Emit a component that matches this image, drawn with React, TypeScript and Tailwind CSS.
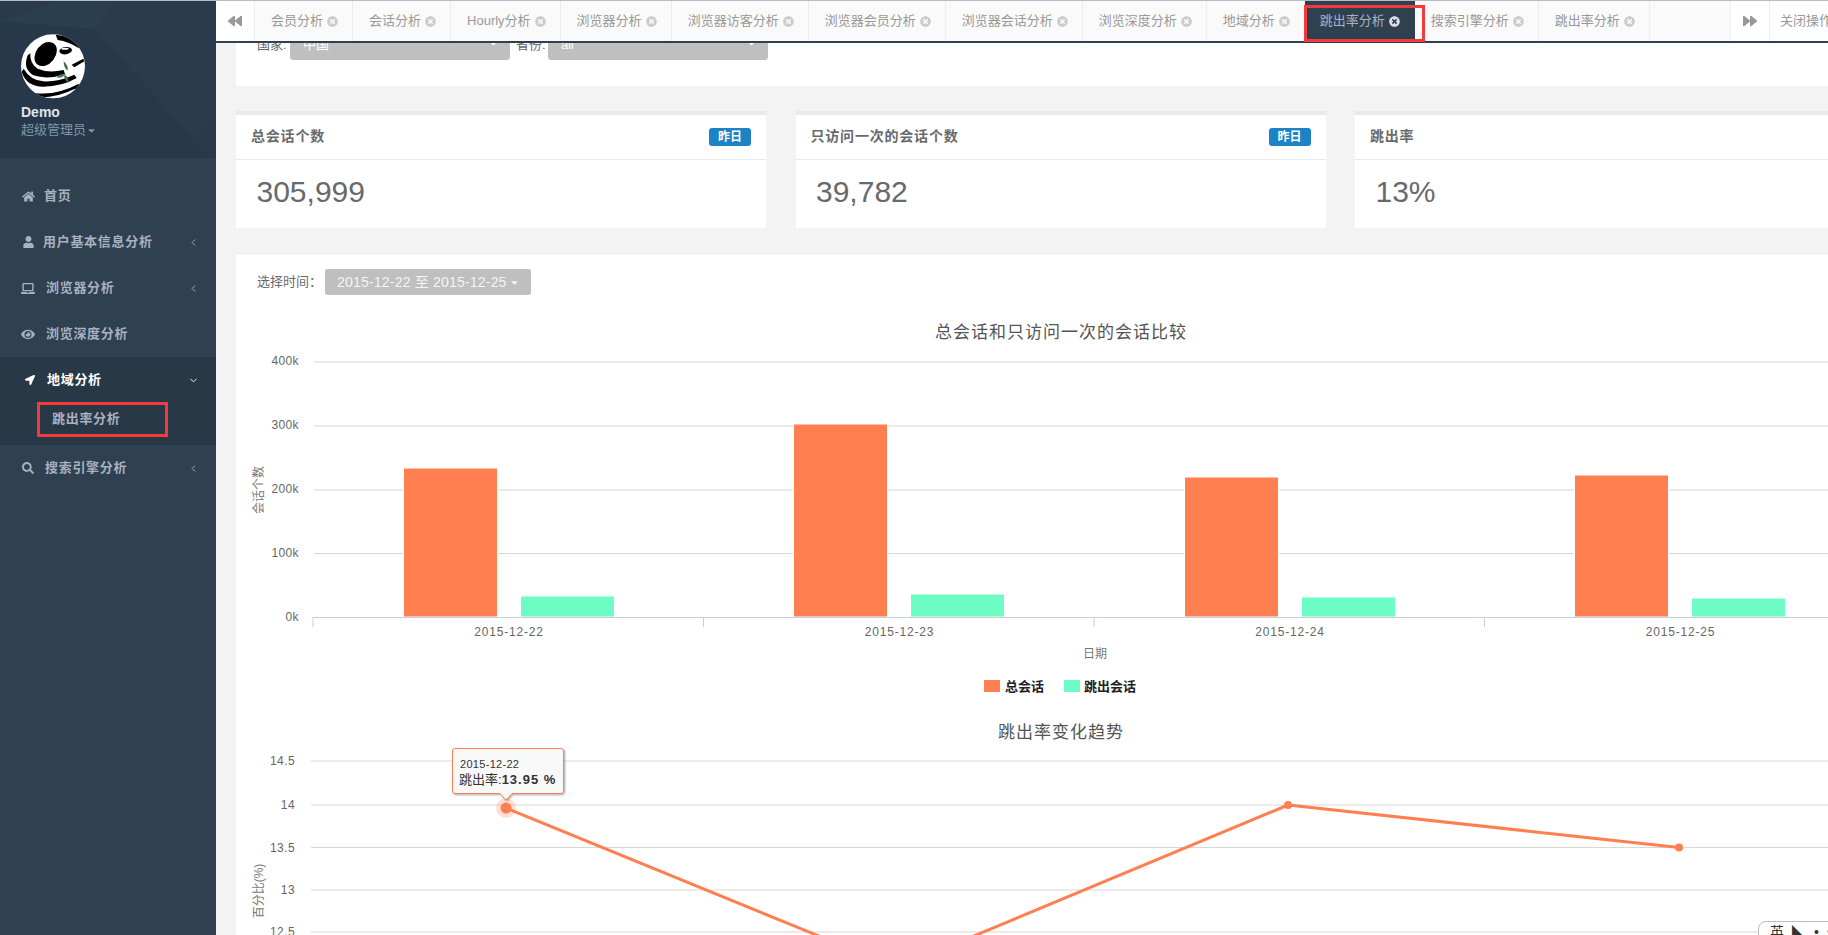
import {
  FaBackward,
  FaCaretDown,
  FaEye,
  FaForward,
  FaHome,
  FaLaptop,
  FaLocationArrow,
  FaSearch,
  FaTimesCircle,
  FaUser,
} from "react-icons/fa";
import { ChevronDown, ChevronLeft } from "lucide-react";

const tabs = [
  "会员分析",
  "会话分析",
  "Hourly分析",
  "浏览器分析",
  "浏览器访客分析",
  "浏览器会员分析",
  "浏览器会话分析",
  "浏览深度分析",
  "地域分析",
  "跳出率分析",
  "搜索引擎分析",
  "跳出率分析",
];
const ACTIVE_TAB = 9;

const bars = [
  { label: "2015-12-22", tick: 313, ox: 404, oy: 468, gy: 596 },
  { label: "2015-12-23", tick: 703.5, ox: 794, oy: 424, gy: 594 },
  { label: "2015-12-24", tick: 1094, ox: 1185, oy: 477, gy: 597 },
  { label: "2015-12-25", tick: 1484.5, ox: 1575, oy: 475, gy: 598 },
];

function Panda() {
  return (
    <svg viewBox="0 0 228 228" className="w-[76px] h-[76px] ml-[15px]">
      <defs>
        <clipPath id="panda-clip">
          <circle cx="114" cy="115" r="96" />
        </clipPath>
      </defs>
      <g clipPath="url(#panda-clip)">
        <rect width="228" height="228" fill="#fff" />
        {/* ear */}
        <path d="M122 20 Q165 22 210 50 L190 60 Q160 40 128 36 Z" fill="#000" />
        {/* eye patch */}
        <ellipse cx="92" cy="78" rx="29" ry="40" transform="rotate(38 92 78)" fill="#000" />
        <ellipse cx="152" cy="68" rx="19" ry="11" transform="rotate(-8 152 68)" fill="#000" />
        <ellipse cx="150" cy="62" rx="11" ry="3" fill="#fff" />
        {/* body stripes */}
        <path d="M38 82 Q22 122 55 142 Q100 156 150 138 L146 126 Q100 136 68 122 Q44 108 46 76 Z" fill="#000" />
        <path d="M20 132 Q34 176 85 176 Q140 176 185 150 L178 140 Q130 162 85 160 Q45 156 26 122 Z" fill="#000" />
        <path d="M55 194 Q120 205 190 168 L215 180 L190 230 L60 215 Z" fill="#000" />
        <path d="M62 207 Q120 212 180 182 L185 190 Q130 222 70 218 Z" fill="#fff" />
        <path d="M170 110 L205 92 L208 100 L178 118 Z" fill="#000" />
        {/* leaves */}
        <path d="M146 100 Q160 112 158 128 Q146 120 146 100 Z" fill="#3f6b47" />
        <path d="M124 148 Q138 134 152 138 Q142 152 124 148 Z" fill="#4d7a55" />
        <path d="M148 140 Q162 146 160 164 Q146 156 148 140 Z" fill="#3f6b47" />
      </g>
    </svg>
  );
}

function SideHeader() {
  return (
    <div className="relative h-[157px] bg-[#283a4b] overflow-hidden">
      <svg className="absolute inset-0 w-full h-full" viewBox="0 0 216 157">
        <polygon points="0,20 95,28 195,140 216,157 0,157" fill="#263849" />
        <polygon points="95,28 115,0 216,0 216,115 190,135" fill="#293b4c" />
        <polygon points="0,20 60,0 115,0 95,28" fill="#2b3e4f" />
      </svg>
      <div className="relative pt-[27px]">
        <Panda />
        <div className="pl-[21px] -mt-[1px] text-[14px] leading-[18px] font-bold text-[#dfe4ed]">Demo</div>
        <div className="pl-[21px] flex items-center text-[13px] leading-[18px] text-[#8095a8]">
          超级管理员
          <FaCaretDown className="w-[11px] h-[11px]" />
        </div>
      </div>
    </div>
  );
}

function NavItem({
  icon,
  label,
  textLeft,
  arrow,
}: {
  icon: React.ReactNode;
  label: string;
  textLeft: string;
  arrow?: boolean;
}) {
  return (
    <div className="h-[46px] flex items-center pl-[21px] pr-[17px] text-[#a7b1c2] text-[13px] font-semibold tracking-[0.7px]">
      <span className="w-[14px] flex justify-center shrink-0">{icon}</span>
      <span className={textLeft}>{label}</span>
      {arrow && <ChevronLeft className="ml-auto w-[11px] h-[11px]" strokeWidth={2} />}
    </div>
  );
}

function Sidebar() {
  return (
    <aside className="w-[216px] shrink-0 bg-[#2f4050]">
      <SideHeader />
      <nav className="pt-[15px]">
        <NavItem icon={<FaHome className="w-[13px] h-[13px]" />} label="首页" textLeft="ml-[9px] -mt-[1px]" />
        <NavItem icon={<FaUser className="w-[11px] h-[12px]" />} label="用户基本信息分析" textLeft="ml-[8px] -mt-[1px]" arrow />
        <NavItem icon={<FaLaptop className="w-[14px] h-[13px]" />} label="浏览器分析" textLeft="ml-[11px] -mt-[1px]" arrow />
        <NavItem icon={<FaEye className="w-[14px] h-[13px]" />} label="浏览深度分析" textLeft="ml-[11px] -mt-[1px]" />
        <div className="h-[88px] bg-[#293846]">
          <div className="h-[46px] flex items-center pl-[25px] pr-[17px] text-white text-[13px] font-bold tracking-[0.7px]">
            <FaLocationArrow className="w-[10px] h-[10px]" />
            <span className="ml-[12px] -mt-[1px]">地域分析</span>
            <ChevronDown className="ml-auto w-[11px] h-[11px]" strokeWidth={2} />
          </div>
          <div className="ml-[37px] -mt-[1px] w-[131px] h-[35px] border-[3px] border-[#f33b3b] flex items-center pl-[12px] pb-[2px] text-[#a7b1c2] text-[13px] font-semibold tracking-[0.7px]">
            跳出率分析
          </div>
        </div>
        <NavItem icon={<FaSearch className="w-[12px] h-[12px]" />} label="搜索引擎分析" textLeft="ml-[10px] -mt-[1px]" arrow />
      </nav>
    </aside>
  );
}

function TabBar() {
  return (
    <div className="h-[42px] shrink-0 flex bg-white border-b-2 border-[#2f4050]">
      <div className="w-[39px] shrink-0 flex items-center justify-center border-r border-[#eee] text-[#999]">
        <FaBackward className="w-[14px] h-[14px]" />
      </div>
      <div className="w-[1475px] shrink-0 flex bg-[#fafafa]">
        {tabs.map((t, i) => (
          <div
            key={i}
            className={
              i === ACTIVE_TAB
                ? "relative shrink-0 flex items-center pl-[15px] pr-[15px] bg-[#2f4050] text-[#a7b1c2] text-[13px]"
                : "shrink-0 flex items-center pl-[16px] pr-[14px] border-r border-[#eee] text-[#999] text-[13px]"
            }
          >
            {t}
            <FaTimesCircle
              className={
                i === ACTIVE_TAB
                  ? "ml-[4px] w-[11px] h-[11px] text-[#dde]"
                  : "ml-[4px] w-[11px] h-[11px] text-[#ccc]"
              }
            />
            {i === ACTIVE_TAB && (
              <div className="absolute -left-[1px] top-[4px] w-[121px] h-[37px] border-[3px] border-[#f33b3b]" />
            )}
          </div>
        ))}
      </div>
      <div className="w-[40px] shrink-0 flex items-center justify-center border-x border-[#eee] text-[#999]">
        <FaForward className="w-[14px] h-[14px]" />
      </div>
      <div className="pl-[10px] flex items-center whitespace-nowrap text-[#999] text-[13px]">关闭操作</div>
    </div>
  );
}

function FilterPanel() {
  return (
    <div className="h-[43px] overflow-hidden bg-white pl-[21px]">
      <div className="-mt-[17px] h-[34px] flex items-center text-[13px] text-[#676a6c]">
        <span className="w-[33px] mt-[4px]">国家:</span>
        <div className="w-[220px] h-[34px] rounded-[3px] bg-[#bfbfbf] text-white flex items-center justify-between pl-[13px] pr-[12px]">
          <span className="mt-[4px]">中国</span>
          <FaCaretDown className="w-[9px] h-[9px]" />
        </div>
        <span className="ml-[6px] w-[32px] mt-[4px]">省份:</span>
        <div className="w-[220px] h-[34px] rounded-[3px] bg-[#bfbfbf] text-white flex items-center justify-between pl-[13px] pr-[12px]">
          <span className="mt-[4px]">all</span>
          <FaCaretDown className="w-[9px] h-[9px]" />
        </div>
      </div>
    </div>
  );
}

function StatCard({ title, value, badge }: { title: string; value: string; badge?: boolean }) {
  return (
    <div className="w-[530px] h-[117px] shrink-0 bg-white border-t-4 border-[#e7eaec] text-[#676a6c]">
      <div className="h-[45px] flex items-center justify-between px-[15px] border-b border-[#e7eaec]">
        <span className="text-[14px] font-semibold tracking-[0.8px] -mt-[1px]">{title}</span>
        {badge && (
          <span className="w-[42px] h-[18px] rounded-[3px] bg-[#1c84c6] text-white text-[12px] font-semibold flex items-center justify-center">
            昨日
          </span>
        )}
      </div>
      <div className="pl-[20.5px] pt-[14px] text-[30px] leading-[36px]">{value}</div>
    </div>
  );
}

function BarChart() {
  const grid = [
    { y: 362, t: "400k" },
    { y: 426, t: "300k" },
    { y: 490, t: "200k" },
    { y: 553.5, t: "100k" },
  ];
  return (
    <svg viewBox="236 300 1592 400" className="w-[1592px] h-[400px] mt-[5px] block">
      <text x="1061" y="338" textAnchor="middle" fontSize="17" letterSpacing="1" fill="#555">
        总会话和只访问一次的会话比较
      </text>
      {grid.map((g) => (
        <g key={g.t}>
          <line x1="314" x2="1828" y1={g.y} y2={g.y} stroke="#d8d8d8" />
          <text x="299" y={g.y + 3} textAnchor="end" fontSize="12" letterSpacing="0.4" fill="#666">
            {g.t}
          </text>
        </g>
      ))}
      <text x="299" y="621" textAnchor="end" fontSize="12" letterSpacing="0.4" fill="#666">
        0k
      </text>
      {bars.map((b) => (
        <g key={b.label}>
          <rect x={b.ox - 0.5} y={b.oy} width="94" height={617 - b.oy} fill="#ff7f50" stroke="#fff" />
          <rect x={b.ox + 116.5} y={b.gy} width="94" height={617 - b.gy} fill="#6dfcc4" stroke="#fff" />
          <line x1={b.tick} x2={b.tick} y1="617" y2="627" stroke="#c0d0e0" />
          <text x={b.tick + 196} y="636" textAnchor="middle" fontSize="12" letterSpacing="0.8" fill="#666">
            {b.label}
          </text>
        </g>
      ))}
      <line x1="313" x2="1828" y1="617.5" y2="617.5" stroke="#c0d0e0" />
      <text x="263" y="490" textAnchor="middle" fontSize="12" fill="#777" transform="rotate(-90 263 490)">
        会话个数
      </text>
      <text x="1095" y="658" textAnchor="middle" fontSize="12" fill="#777">
        日期
      </text>
      <rect x="984" y="680" width="16" height="12" fill="#ff7f50" />
      <text x="1005" y="691" fontSize="13" fontWeight="700" fill="#222">
        总会话
      </text>
      <rect x="1064" y="680" width="16" height="12" fill="#6dfcc4" />
      <text x="1084" y="691" fontSize="13" fontWeight="700" fill="#222">
        跳出会话
      </text>
    </svg>
  );
}

function LineChart() {
  const grid = [
    { y: 761, t: "14.5" },
    { y: 805, t: "14" },
    { y: 847.5, t: "13.5" },
    { y: 890, t: "13" },
    { y: 932, t: "12.5" },
  ];
  return (
    <svg viewBox="236 700 1592 300" className="w-[1592px] h-[300px] block">
      <defs>
        <filter id="tip-shadow" x="-10%" y="-10%" width="120%" height="130%">
          <feDropShadow dx="1" dy="1" stdDeviation="1" floodColor="#000" floodOpacity="0.35" />
        </filter>
      </defs>
      <text x="1061" y="738" textAnchor="middle" fontSize="17" letterSpacing="1" fill="#555">
        跳出率变化趋势
      </text>
      {grid.map((g) => (
        <g key={g.t}>
          <line x1="311" x2="1828" y1={g.y} y2={g.y} stroke="#d8d8d8" />
          <text x="295" y={g.y + 4} textAnchor="end" fontSize="12" letterSpacing="0.4" fill="#666">
            {g.t}
          </text>
        </g>
      ))}
      <text x="263" y="891" textAnchor="middle" fontSize="12" fill="#777" transform="rotate(-90 263 891)">
        百分比(%)
      </text>
      <polyline
        points="506,808 897,968 1288,805 1679,847.5"
        fill="none"
        stroke="#ff7f50"
        strokeWidth="3"
        strokeLinejoin="round"
      />
      <circle cx="506" cy="808" r="10" fill="#ff7f50" opacity="0.25" />
      <circle cx="506" cy="808" r="5.5" fill="#ff7f50" />
      <circle cx="1288" cy="805" r="4" fill="#ff7f50" />
      <circle cx="1679" cy="847.5" r="4" fill="#ff7f50" />
      <path
        d="M455 748.5 H561 Q563.5 748.5 563.5 751 V791 Q563.5 793.5 561 793.5 H512 L506 800 L500 793.5 H455 Q452.5 793.5 452.5 791 V751 Q452.5 748.5 455 748.5 Z"
        fill="#f9f9f9"
        stroke="#ff7f50"
        filter="url(#tip-shadow)"
      />
      <text x="460" y="768" fontSize="11" letterSpacing="0.3" fill="#333">
        2015-12-22
      </text>
      <text x="459" y="784" fontSize="13" fill="#333">
        跳出率:
        <tspan fontWeight="700" letterSpacing="1">
          13.95 %
        </tspan>
      </text>
    </svg>
  );
}

export default function App() {
  return (
    <div className="relative w-[1828px] h-[935px] overflow-hidden bg-[#f3f3f4] font-['Liberation_Sans','Noto_Sans_CJK_SC',sans-serif]">
      <div className="h-px bg-[#b7bbc6]" />
      <div className="flex h-[934px]">
        <Sidebar />
        <main className="w-[1612px] flex flex-col overflow-hidden">
          <TabBar />
          <div className="pl-[20px]">
            <FilterPanel />
            <div className="mt-[25px] flex gap-[29.5px]">
              <StatCard title="总会话个数" value="305,999" badge />
              <StatCard title="只访问一次的会话个数" value="39,782" badge />
              <StatCard title="跳出率" value="13%" />
            </div>
            <section className="mt-[25px] bg-white border-t border-[#e7eaec] pt-[15px]">
              <div className="flex items-center h-[26px] pl-[21px]">
                <span className="w-[68px] text-[13px] text-[#676a6c] whitespace-nowrap">选择时间：</span>
                <div className="w-[206px] h-[26px] rounded-[3px] bg-[#bfbfbf] text-[#f4f4f4] text-[14px] tracking-[0.2px] flex items-center pl-[12px]">
                  2015-12-22 至 2015-12-25
                  <FaCaretDown className="ml-[2px] w-[11px] h-[11px]" />
                </div>
              </div>
              <BarChart />
              <LineChart />
            </section>
          </div>
        </main>
      </div>
      {/* input method bar */}
      <div className="absolute left-[1758px] top-[921px] w-[80px] h-[20px] bg-white border border-[#bbb] rounded-tl-[8px] flex items-start gap-[8px] pl-[11px] pt-[3px] text-[14px] leading-[14px] text-[#333]">
        <span>英</span>
        <span>◣</span>
        <span>•</span>
        <span>❀</span>
      </div>
    </div>
  );
}
